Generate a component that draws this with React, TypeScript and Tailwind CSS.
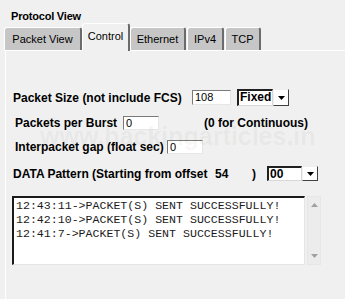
import React from 'react';

const tabs = [
  { label: 'Packet View', w: 'w-[78px]', gap: '' },
  { label: 'Control', w: 'w-[48px]', gap: '', active: true },
  { label: 'Ethernet', w: 'w-[56px]', gap: '' },
  { label: 'IPv4', w: 'w-[37px]', gap: 'ml-[1px]' },
  { label: 'TCP', w: 'w-[36px]', gap: 'ml-[1px]' },
];

const log = [
  '12:43:11->PACKET(S) SENT SUCCESSFULLY!',
  '12:42:10->PACKET(S) SENT SUCCESSFULLY!',
  '12:41:7->PACKET(S) SENT SUCCESSFULLY!',
];

function TextBox({ value, className }: { value: string; className: string }) {
  return (
    <div className={`${className} bg-white border-t border-l border-t-[#7a7a7a] border-l-[#7a7a7a] border-r border-b border-r-[#e6e6e6] border-b-[#e6e6e6] pl-[2px] text-[11px] leading-[13px] font-normal text-black`}>
      {value}
    </div>
  );
}

function Combo({ value, boxW, h }: { value: string; boxW: string; h: string }) {
  return (
    <div className={`flex ${h}`}>
      <div className={`${boxW} h-full bg-white border-t-2 border-l-2 border-t-[#202020] border-l-[#202020] border-r border-b border-r-[#d8d8d8] border-b-[#d8d8d8] pl-[1px] text-[12px] leading-[13px] font-bold text-black`}>
        {value}
      </div>
      <div className="w-[16px] h-full bg-white border border-t-[#f0f0f0] border-l-[#f0f0f0] border-r-[#404040] border-b-[#404040] flex items-center justify-center">
        <svg width="7" height="4" viewBox="0 0 7 4"><path d="M0 0h7L3.5 4z" fill="#000" /></svg>
      </div>
    </div>
  );
}

export default function App() {
  return (
    <div className="relative w-[345px] h-[299px] overflow-hidden bg-[#f0f0f0] text-black" style={{ fontFamily: '"Liberation Sans", Arial, sans-serif' }}>
      {/* Header */}
      <div className="h-[23px] pt-[10px] pl-[11px] text-[11px] leading-[13px] font-bold tracking-[-0.2px]">Protocol View</div>

      {/* Tabs */}
      <div className="flex items-end h-[27px] pl-[4px]">
        {tabs.map((t) =>
          t.active ? (
            <div key={t.label} className={`relative z-10 ${t.w} h-[28px] mb-[-1px] bg-[#f0f0f0] border-t border-l border-white border-r-2 border-r-[#6b6b6b] rounded-t-[3px] flex items-start justify-center pt-[6px] text-[11px] leading-[13px]`}>
              {t.label}
            </div>
          ) : (
            <div key={t.label} className={`${t.gap} ${t.w} h-[23px] bg-[#c6c6c6] border-t border-l border-white border-r-2 border-r-[#6b6b6b] rounded-t-[3px] flex items-center justify-center text-[11px] leading-[13px]`}>
              {t.label}
            </div>
          ),
        )}
      </div>

      {/* Panel */}
      <div className="ml-[5px] h-[260px] border-t border-l border-white pl-[7px] font-bold text-[12px] leading-[14px]">
        <div className="flex items-center h-[17px] mt-[38px]">
          <span className="w-[179px]">Packet Size (not include FCS)</span>
          <TextBox value="108" className="w-[39px] h-[15px]" />
          <div className="ml-[6px]">
            <Combo value="Fixed" boxW="w-[36px]" h="h-[17px]" />
          </div>
        </div>

        <div className="flex items-center h-[15px] mt-[9px] pl-[2px]">
          <span className="w-[108px]">Packets per Burst</span>
          <TextBox value="0" className="w-[36px] h-[14px]" />
          <span className="ml-[45px]">(0 for Continuous)</span>
        </div>

        <div className="flex items-center h-[14px] mt-[10px] pl-[2px]">
          <span className="w-[152px] whitespace-nowrap">Interpacket gap (float sec)</span>
          <TextBox value="0" className="w-[36px] h-[14px]" />
        </div>

        <div className="flex items-center h-[15px] mt-[12px]">
          <span className="w-[202px] whitespace-nowrap">DATA Pattern (Starting from offset</span>
          <span className="w-[37px]">54</span>
          <span className="w-[15px]">)</span>
          <Combo value="00" boxW="w-[35px]" h="h-[15px]" />
        </div>

        <div className="flex mt-[15px] ml-[-1px]">
          <div className="w-[293px] h-[69px] bg-white border-t-2 border-l-2 border-t-[#1a1a1a] border-l-[#1a1a1a] border-r border-b border-r-[#e4e4e4] border-b-[#e4e4e4] pl-[2px] pt-[1px] text-[11.6px] leading-[14px] font-normal text-[#1c1c1c]" style={{ fontFamily: '"Liberation Mono", "Courier New", monospace' }}>
            {log.map((l) => (
              <div key={l} className="whitespace-pre">{l}</div>
            ))}
          </div>
          <div className="ml-[2px] w-[14px] h-[69px] bg-[#ececec] border border-[#e6e6e6] flex flex-col items-center justify-between py-[6px]">
            <svg width="7" height="4" viewBox="0 0 7 4"><path d="M0 4h7L3.5 0z" fill="#a0a0a0" /></svg>
            <svg width="7" height="4" viewBox="0 0 7 4"><path d="M0 0h7L3.5 4z" fill="#a0a0a0" /></svg>
          </div>
        </div>
      </div>

      {/* Watermark */}
      <div className="absolute left-[40px] top-[124px] text-[25px] leading-[25px] font-bold text-black/[0.05] pointer-events-none whitespace-nowrap">
        www.hackingarticles.in
      </div>
    </div>
  );
}
